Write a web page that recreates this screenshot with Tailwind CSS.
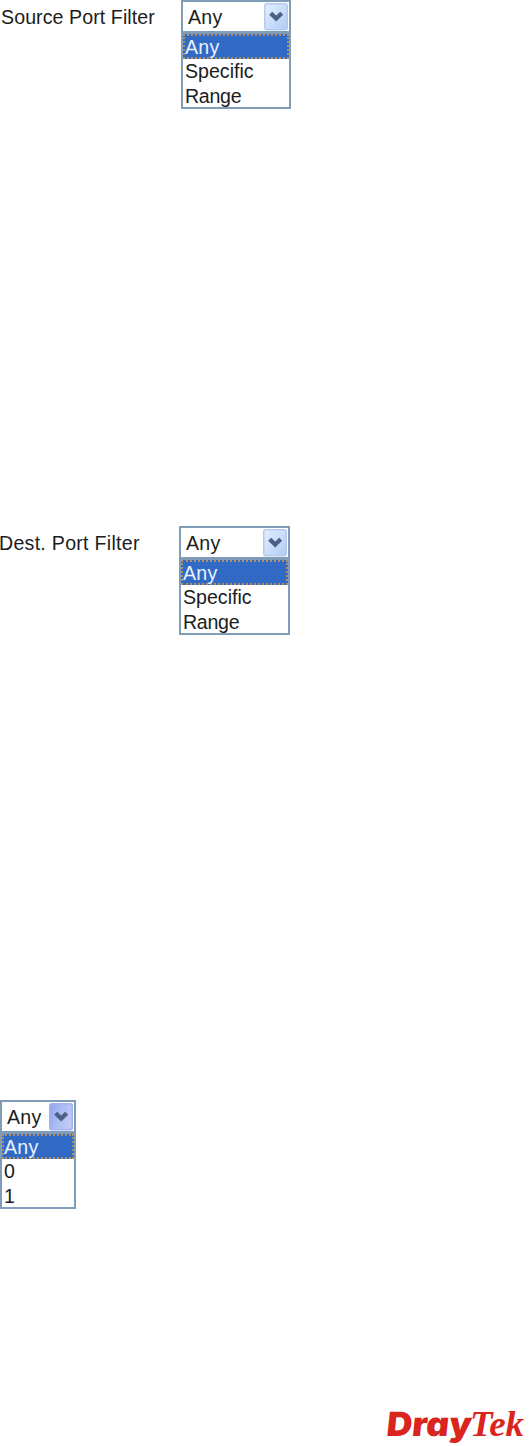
<!DOCTYPE html>
<html lang="en">
<head>
    <meta charset="UTF-8">
    <meta name="viewport" content="width=device-width, initial-scale=1.0">
    <title>Port Filter</title>
    <script src="https://cdn.jsdelivr.net/npm/@tailwindcss/browser@4"></script>
</head>
<body class="bg-white">
    <main class="flex h-[1446px] w-[529px] flex-col overflow-hidden font-['Liberation_Sans',Arial,sans-serif] text-[19.6px] leading-[24px] text-[#1c1c20]">
        <!-- Source port -->
        <section class="flex h-[109px] items-start">
            <label class="w-[181px] shrink-0 pt-[5px] pl-px tracking-[0.08px]">Source Port Filter</label>
            <div class="h-[109px] w-[110px] border-2 border-[#7f9db9] bg-white">
                <div class="flex h-[29px] justify-between pt-px pr-px pl-[5px]">
                    <span class="pt-[2px] tracking-[0.3px]">Any</span>
                    <svg class="h-[28px] w-[24px]" viewBox="0 0 24 28">
                        <defs>
                            <linearGradient id="arrow" x1="0" y1="0" x2="1" y2="1">
                                <stop offset="0" stop-color="#e3efff" />
                                <stop offset="0.6" stop-color="#c6dafb" />
                                <stop offset="1" stop-color="#b2cbf3" />
                            </linearGradient>
                        </defs>
                        <rect x="0.75" y="0.75" width="22.5" height="26" rx="2" fill="url(#arrow)" stroke="#b5cbee" stroke-width="1.5" />
                        <path d="M6.7 10.2 L12.2 15.6 L17.7 10.2" fill="none" stroke="#4d6185" stroke-width="4.3" />
                    </svg>
                </div>
                <ul class="border-t-3 border-[#7f9db9]">
                    <li class="h-[25px] border-2 border-dotted border-[#ab9069] bg-[#316ac5] leading-[23px] tracking-[0.3px] text-[#e9f0fc]">Any</li>
                    <li class="h-[24px] pl-[2px]">Specific</li>
                    <li class="h-[24px] pt-px pl-[2px] tracking-[-0.3px]">Range</li>
                </ul>
            </div>
        </section>

        <!-- Destination port -->
        <section class="mt-[417px] flex h-[109px] items-start">
            <label class="w-[179px] shrink-0 pt-[5px] -indent-px tracking-[0.27px]">Dest. Port Filter</label>
            <div class="h-[109px] w-[111px] border-2 border-[#7f9db9] bg-white">
                <div class="flex h-[29px] justify-between pt-px pr-px pl-[5px]">
                    <span class="pt-[2px] tracking-[0.3px]">Any</span>
                    <svg class="h-[28px] w-[24px]" viewBox="0 0 24 28">
                        <rect x="0.75" y="0.75" width="22.5" height="26" rx="2" fill="url(#arrow)" stroke="#b5cbee" stroke-width="1.5" />
                        <path d="M6.7 10.2 L12.2 15.6 L17.7 10.2" fill="none" stroke="#4d6185" stroke-width="4.3" />
                    </svg>
                </div>
                <ul class="border-t-3 border-[#7f9db9]">
                    <li class="h-[25px] border-2 border-dotted border-[#ab9069] bg-[#316ac5] leading-[23px] tracking-[0.3px] text-[#e9f0fc]">Any</li>
                    <li class="h-[24px] pl-[2px]">Specific</li>
                    <li class="h-[24px] pt-px pl-[2px] tracking-[-0.3px]">Range</li>
                </ul>
            </div>
        </section>

        <!-- Priority -->
        <section class="mt-[465px] h-[109px] w-[76px] border-2 border-[#7f9db9] bg-white">
            <div class="flex h-[29px] justify-between pt-px pr-px pl-[5px]">
                <span class="pt-[2px] tracking-[0.3px]">Any</span>
                <svg class="h-[28px] w-[24px]" viewBox="0 0 24 28">
                    <defs>
                        <linearGradient id="pressed" x1="0" y1="0" x2="1" y2="0.4">
                            <stop offset="0" stop-color="#8ea2ee" />
                            <stop offset="0.5" stop-color="#a8bdf2" />
                            <stop offset="1" stop-color="#c3c9f6" />
                        </linearGradient>
                    </defs>
                    <rect x="0.75" y="0.75" width="22.5" height="26" rx="2" fill="url(#pressed)" stroke="#a3b2ef" stroke-width="1.5" />
                    <path d="M6.7 10.2 L12.2 15.6 L17.7 10.2" fill="none" stroke="#4d6185" stroke-width="4.3" />
                </svg>
            </div>
            <ul class="border-t-3 border-[#7f9db9]">
                <li class="h-[25px] border-2 border-dotted border-[#ab9069] bg-[#316ac5] leading-[23px] tracking-[0.3px] text-[#e9f0fc]">Any</li>
                <li class="h-[24px] pl-[2px]">0</li>
                <li class="h-[24px] pt-px pl-[2px]">1</li>
            </ul>
        </section>

        <!-- Logo -->
        <footer class="mt-[195px] pl-[386px]">
            <svg class="h-[42px] w-[143px] overflow-visible" viewBox="0 0 143 42" fill="#d9251d">
                <text x="3" y="32" transform="skewX(-6)" textLength="85" lengthAdjust="spacingAndGlyphs" class="font-['Inter',sans-serif] text-[33.5px] font-black [font-feature-settings:'cv11']">Dray</text>
                <text x="84" y="32" textLength="54" lengthAdjust="spacingAndGlyphs" class="font-['Liberation_Serif',serif] text-[36.5px] font-bold italic">Tek</text>
            </svg>
        </footer>
    </main>
</body>
</html>
